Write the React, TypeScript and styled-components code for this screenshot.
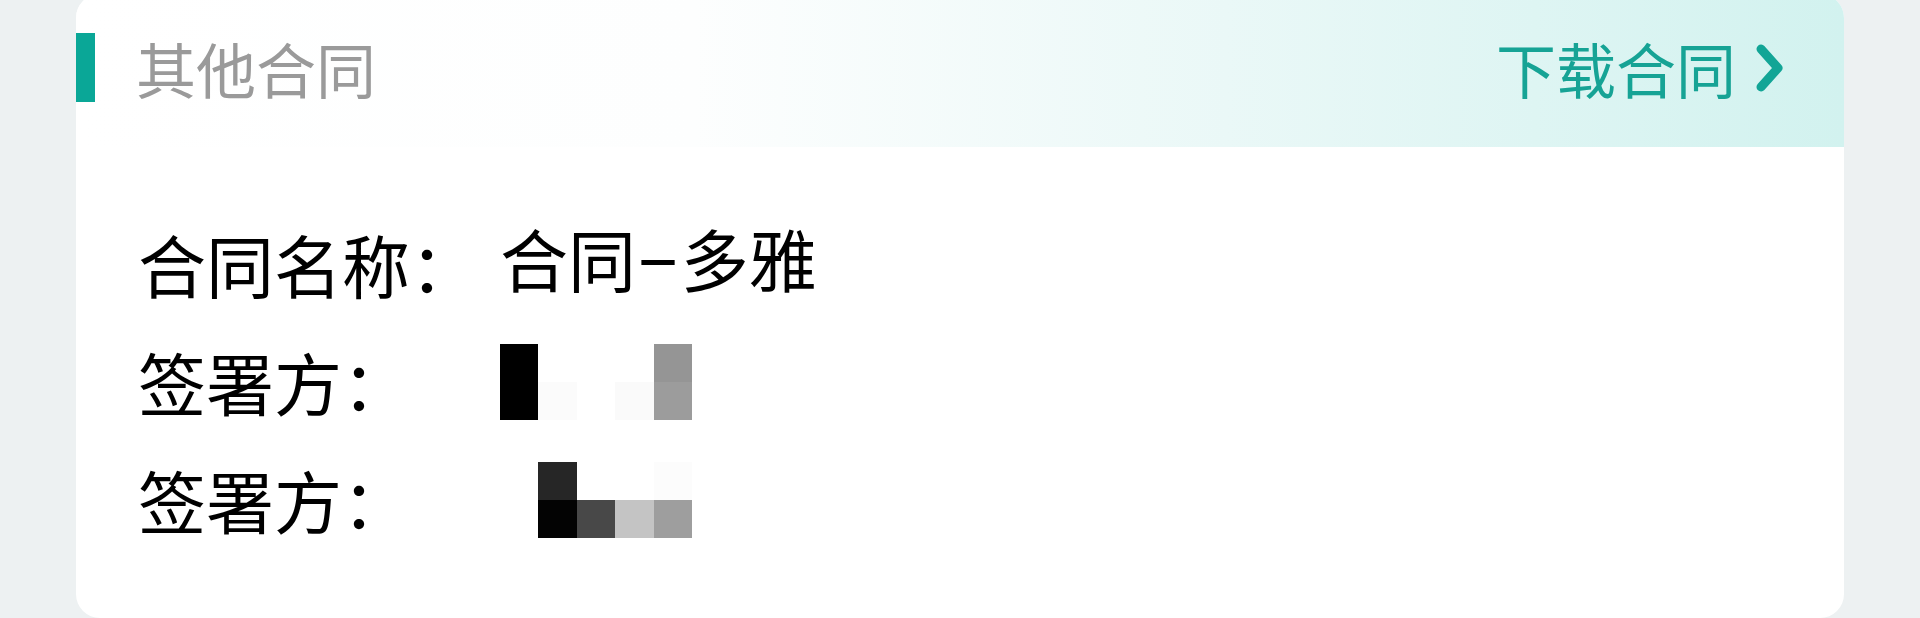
import React from "react";
import styled, { createGlobalStyle } from "styled-components";

const GlobalStyle = createGlobalStyle`
  html, body {
    margin: 0;
    padding: 0;
    background: #edf1f2;
  }
  body {
    width: 1920px;
    height: 618px;
    overflow: hidden;
    font-family: Roboto, "Noto Sans CJK SC", sans-serif;
  }
`;

const Page = styled.div`
  height: 618px;
  padding: 0 76px;
  overflow: hidden;
  box-sizing: border-box;
`;

const Card = styled.section`
  margin-top: -6px;
  width: 1768px;
  height: 624px;
  background: #ffffff;
  border-radius: 24px;
  overflow: hidden;
  display: flex;
  flex-direction: column;
`;

const Header = styled.header`
  height: 153px;
  box-sizing: border-box;
  padding: 0 60px 6px 0;
  display: flex;
  align-items: center;
  background: linear-gradient(90deg, #ffffff 0%, #fdfefe 35%, #eaf8f7 65%, #d2f2ef 100%);
`;

const Accent = styled.span`
  width: 19px;
  height: 69px;
  background: #0aa797;
  flex-shrink: 0;
`;

const Title = styled.h2`
  margin: 0 0 0 41px;
  font-family: "Noto Sans CJK SC", sans-serif;
  font-weight: 400;
  font-size: 60px;
  line-height: 1;
  color: #9a9a9a;
  flex: 1;
`;

const DownloadLink = styled.a`
  display: flex;
  align-items: center;
  gap: 20px;
  font-family: "Noto Sans CJK SC", sans-serif;
  font-size: 60px;
  line-height: 1;
  color: #16a395;
  text-decoration: none;
  cursor: pointer;
`;

const Body = styled.div`
  padding: 58px 0 0 62px;
  display: flex;
  flex-direction: column;
`;

const Row = styled.div`
  display: grid;
  grid-template-columns: 362px 1fr;
  align-items: center;
  height: 118px;
`;

const Label = styled.span`
  font-family: "Noto Sans CJK SC", sans-serif;
  font-size: 68px;
  line-height: 1;
  color: #000000;
  white-space: nowrap;
`;

const Value = styled.span`
  font-family: Roboto, "Noto Sans CJK SC", sans-serif;
  font-size: 68px;
  line-height: 1;
  color: #000000;
  white-space: nowrap;
`;

const Mosaic = styled.div<{ $cols: number }>`
  display: grid;
  grid-template-columns: repeat(${(p) => p.$cols}, 38.4px);
  grid-auto-rows: 38.4px;
`;

const Cell = styled.span<{ $c: string }>`
  background: ${(p) => p.$c};
`;

const Chevron = () => (
  <svg width="28" height="48" viewBox="0 0 28 48" aria-hidden="true">
    <polyline
      points="5,5 22,24 5,43"
      fill="none"
      stroke="#12a596"
      strokeWidth="9"
      strokeLinecap="round"
      strokeLinejoin="round"
    />
  </svg>
);

const mosaicA = [
  ["#000000", "#ffffff", "#ffffff", "#ffffff", "#959595"],
  ["#000000", "#fbfbfb", "#ffffff", "#fafafa", "#9c9c9c"],
];

const mosaicB = [
  ["#ffffff", "#262626", "#ffffff", "#ffffff", "#fcfcfc"],
  ["#ffffff", "#030303", "#484848", "#c4c4c4", "#9e9e9e"],
];

const Redacted = ({ grid }: { grid: string[][] }) => (
  <Mosaic $cols={grid[0].length}>
    {grid.flat().map((c, i) => (
      <Cell key={i} $c={c} />
    ))}
  </Mosaic>
);

export default function App() {
  return (
    <>
      <GlobalStyle />
      <Page>
        <Card>
          <Header>
            <Accent />
            <Title>其他合同</Title>
            <DownloadLink>
              下载合同
              <Chevron />
            </DownloadLink>
          </Header>
          <Body>
            <Row>
              <Label>合同名称：</Label>
              <Value>合同–多雅</Value>
            </Row>
            <Row>
              <Label>签署方：</Label>
              <Redacted grid={mosaicA} />
            </Row>
            <Row>
              <Label>签署方：</Label>
              <Redacted grid={mosaicB} />
            </Row>
          </Body>
        </Card>
      </Page>
    </>
  );
}
